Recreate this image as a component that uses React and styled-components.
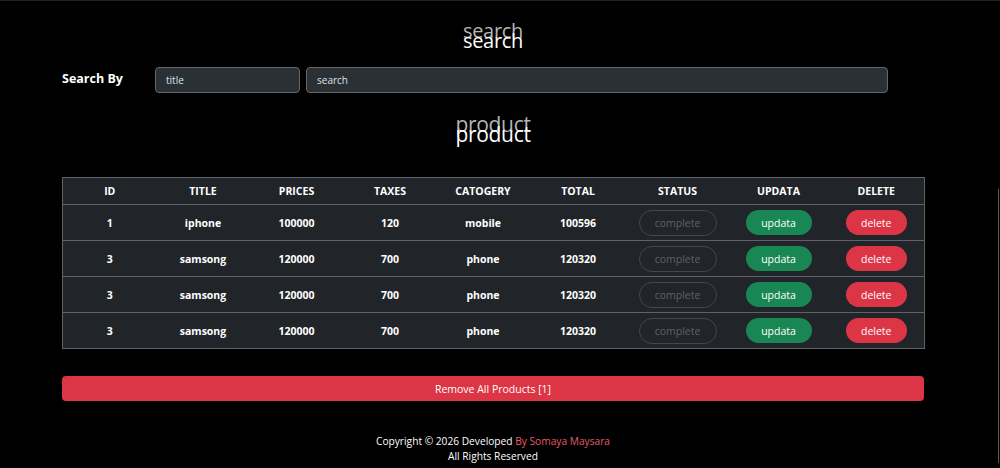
import React from 'react';
import styled, { createGlobalStyle } from 'styled-components';

const GlobalStyle = createGlobalStyle`
  html, body {
    margin: 0;
    padding: 0;
    background: #000;
    color: #fff;
    font-family: "Open Sans", "Noto Sans", sans-serif;
  }
  body {
    border-top: 1px solid #222;
    overflow: hidden;
  }
`;

const products = [
  { id: 1, title: 'iphone', price: 100000, taxes: 120, category: 'mobile', total: 100596 },
  { id: 3, title: 'samsong', price: 120000, taxes: 700, category: 'phone', total: 120320 },
  { id: 3, title: 'samsong', price: 120000, taxes: 700, category: 'phone', total: 120320 },
  { id: 3, title: 'samsong', price: 120000, taxes: 700, category: 'phone', total: 120320 },
];

const colWidths = [94, 93, 94, 93, 93, 97, 102, 100, 96];
const headers = ['ID', 'TITLE', 'PRICES', 'TAXES', 'CATOGERY', 'TOTAL', 'STATUS', 'UPDATA', 'DELETE'];

const App = () => {
  return (
    <>
      <GlobalStyle />
      <Page>
        <Heading data-text="search">search</Heading>
        <SearchRow>
          <Label>Search By</Label>
          <Input width="145px" defaultValue="title" />
          <Input width="582px" defaultValue="search" />
        </SearchRow>
        <Heading data-text="product" $top="29px" $size="21px">product</Heading>
        <Table>
          <colgroup>
            {colWidths.map((w, i) => (
              <col key={i} style={{ width: w }} />
            ))}
          </colgroup>
          <thead>
            <tr>
              {headers.map((h) => (
                <Th key={h}>{h}</Th>
              ))}
            </tr>
          </thead>
          <tbody>
            {products.map((p, i) => (
              <tr key={i}>
                <Td>{p.id}</Td>
                <Td>{p.title}</Td>
                <Td>{p.price}</Td>
                <Td>{p.taxes}</Td>
                <Td>{p.category}</Td>
                <Td>{p.total}</Td>
                <Td><StatusButton>complete</StatusButton></Td>
                <Td><PillButton $bg="#198754" $w="66px">updata</PillButton></Td>
                <Td><PillButton $bg="#dc3545" $w="61px">delete</PillButton></Td>
              </tr>
            ))}
          </tbody>
        </Table>
        <RemoveAll>Remove All Products [1]</RemoveAll>
        <Footer>
          <div>Copyright © 2026 Developed <Accent>By Somaya Maysara</Accent></div>
          <div>All Rights Reserved</div>
        </Footer>
      </Page>
      <EdgeLine />
    </>
  );
};

export default App;

const Page = styled.div`
  width: 862px;
  margin-left: 62px;
  display: flex;
  flex-direction: column;
`

const Heading = styled.h2`
  position: relative;
  isolation: isolate;
  margin: ${({ $top }) => $top || '28px'} 0 0;
  text-align: center;
  font-size: ${({ $size }) => $size || '20px'};
  font-weight: 400;
  line-height: 24px;
  color: #fff;
  letter-spacing: -0.3px;

  &::before {
    content: attr(data-text);
    position: absolute;
    left: 0;
    right: 0;
    top: -10px;
    color: #b5b5b5;
    z-index: -1;
  }
`

const SearchRow = styled.div`
  display: flex;
  align-items: center;
  gap: 6px;
  margin-top: 14px;
`

const Label = styled.span`
  width: 87px;
  font-size: 12.5px;
  font-weight: 700;
  margin-top: -4px;
`

const Input = styled.input`
  box-sizing: border-box;
  width: ${({ width }) => width};
  height: 26px;
  padding: 0 10px;
  background: #2b3035;
  border: 1px solid #62676c;
  border-radius: 4px;
  color: #dee2e6;
  font-family: inherit;
  font-size: 10px;
  outline: none;
`

const Table = styled.table`
  margin-top: 31px;
  width: 862px;
  border-collapse: collapse;
  table-layout: fixed;
  background: #212529;
  border: 1px solid #5f6367;
`

const Th = styled.th`
  height: 26px;
  padding: 0;
  font-size: 10.5px;
  font-weight: 700;
  color: #fff;
  text-align: center;
  border-bottom: 1px solid #5f6367;
`

const Td = styled.td`
  height: 35px;
  padding: 0;
  font-size: 10.5px;
  font-weight: 700;
  color: #fff;
  text-align: center;
  border-bottom: 1px solid #5f6367;
`

const StatusButton = styled.button`
  width: 78px;
  height: 26px;
  background: transparent;
  border: 1px solid #43474b;
  border-radius: 13px;
  color: #5d6267;
  font-family: inherit;
  font-size: 10.5px;
  padding: 0;
`

const PillButton = styled.button`
  width: ${({ $w }) => $w};
  height: 25px;
  background: ${({ $bg }) => $bg};
  border: none;
  border-radius: 13px;
  color: #fff;
  font-family: inherit;
  font-size: 10.5px;
  padding: 0;
`

const RemoveAll = styled.button`
  margin-top: 27px;
  width: 862px;
  height: 25px;
  background: #dc3545;
  border: none;
  border-radius: 4px;
  color: #fff;
  font-family: inherit;
  font-size: 10.5px;
`

const Footer = styled.footer`
  margin-top: 33px;
  margin-left: -62px;
  width: 986px;
  text-align: center;
  font-size: 10.2px;
  line-height: 15px;
  color: #fff;
`

const Accent = styled.span`
  color: #e35d6a;
`

const EdgeLine = styled.div`
  position: fixed;
  right: 1px;
  top: 189px;
  width: 1px;
  height: 274px;
  background: #5a5a5a;
`
